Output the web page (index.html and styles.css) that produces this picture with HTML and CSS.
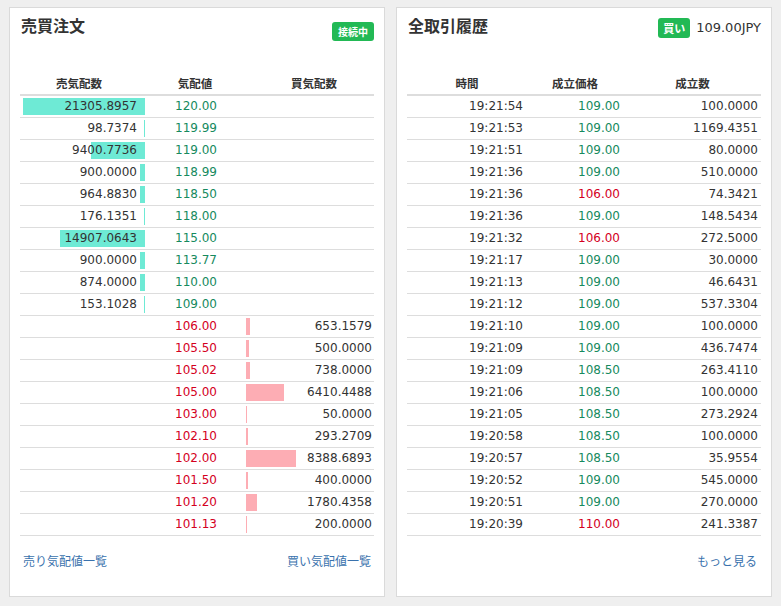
FILE: index.html
```html
<!DOCTYPE html>
<html lang="ja">
<head>
<meta charset="utf-8">
<link rel="stylesheet" href="styles.css">
</head>
<body>
<div class="page">
  <section class="card">
    <div class="card-head">
      <h2 class="title">売買注文</h2>
      <span class="badge badge-conn">接続中</span>
    </div>
    <div class="book">
      <div class="brow bhead">
        <div class="c1">売気配数</div>
        <div class="c2">気配値</div>
        <div class="c3">買気配数</div>
      </div>
      <div class="brow"><div class="c1"><i class="ask" style="width:122px"></i><span>21305.8957</span></div><div class="c2 up">120.00</div><div class="c3"></div></div>
      <div class="brow"><div class="c1"><i class="ask" style="width:0.57px"></i><span>98.7374</span></div><div class="c2 up">119.99</div><div class="c3"></div></div>
      <div class="brow"><div class="c1"><i class="ask" style="width:53.8px"></i><span>9400.7736</span></div><div class="c2 up">119.00</div><div class="c3"></div></div>
      <div class="brow"><div class="c1"><i class="ask" style="width:5.15px"></i><span>900.0000</span></div><div class="c2 up">118.99</div><div class="c3"></div></div>
      <div class="brow"><div class="c1"><i class="ask" style="width:5.5px"></i><span>964.8830</span></div><div class="c2 up">118.50</div><div class="c3"></div></div>
      <div class="brow"><div class="c1"><i class="ask" style="width:1px"></i><span>176.1351</span></div><div class="c2 up">118.00</div><div class="c3"></div></div>
      <div class="brow"><div class="c1"><i class="ask" style="width:85.4px"></i><span>14907.0643</span></div><div class="c2 up">115.00</div><div class="c3"></div></div>
      <div class="brow"><div class="c1"><i class="ask" style="width:5.15px"></i><span>900.0000</span></div><div class="c2 up">113.77</div><div class="c3"></div></div>
      <div class="brow"><div class="c1"><i class="ask" style="width:5px"></i><span>874.0000</span></div><div class="c2 up">110.00</div><div class="c3"></div></div>
      <div class="brow"><div class="c1"><i class="ask" style="width:0.9px"></i><span>153.1028</span></div><div class="c2 up">109.00</div><div class="c3"></div></div>
      <div class="brow"><div class="c1"></div><div class="c2 down">106.00</div><div class="c3"><i class="bid" style="width:3.9px"></i><span>653.1579</span></div></div>
      <div class="brow"><div class="c1"></div><div class="c2 down">105.50</div><div class="c3"><i class="bid" style="width:3px"></i><span>500.0000</span></div></div>
      <div class="brow"><div class="c1"></div><div class="c2 down">105.02</div><div class="c3"><i class="bid" style="width:4.4px"></i><span>738.0000</span></div></div>
      <div class="brow"><div class="c1"></div><div class="c2 down">105.00</div><div class="c3"><i class="bid" style="width:38.2px"></i><span>6410.4488</span></div></div>
      <div class="brow"><div class="c1"></div><div class="c2 down">103.00</div><div class="c3"><i class="bid" style="width:0.3px"></i><span>50.0000</span></div></div>
      <div class="brow"><div class="c1"></div><div class="c2 down">102.10</div><div class="c3"><i class="bid" style="width:1.75px"></i><span>293.2709</span></div></div>
      <div class="brow"><div class="c1"></div><div class="c2 down">102.00</div><div class="c3"><i class="bid" style="width:50px"></i><span>8388.6893</span></div></div>
      <div class="brow"><div class="c1"></div><div class="c2 down">101.50</div><div class="c3"><i class="bid" style="width:2.4px"></i><span>400.0000</span></div></div>
      <div class="brow"><div class="c1"></div><div class="c2 down">101.20</div><div class="c3"><i class="bid" style="width:10.6px"></i><span>1780.4358</span></div></div>
      <div class="brow"><div class="c1"></div><div class="c2 down">101.13</div><div class="c3"><i class="bid" style="width:1.2px"></i><span>200.0000</span></div></div>
    </div>
    <div class="links">
      <a class="link" href="#">売り気配値一覧</a>
      <a class="link" href="#">買い気配値一覧</a>
    </div>
  </section>

  <section class="card">
    <div class="card-head">
      <h2 class="title">全取引履歴</h2>
      <div class="last">
        <span class="badge badge-buy">買い</span>
        <span class="last-price">109.00JPY</span>
      </div>
    </div>
    <div class="trades">
      <div class="trow thead"><div>時間</div><div>成立価格</div><div>成立数</div></div>
      <div class="trow"><div>19:21:54</div><div class="up">109.00</div><div>100.0000</div></div>
      <div class="trow"><div>19:21:53</div><div class="up">109.00</div><div>1169.4351</div></div>
      <div class="trow"><div>19:21:51</div><div class="up">109.00</div><div>80.0000</div></div>
      <div class="trow"><div>19:21:36</div><div class="up">109.00</div><div>510.0000</div></div>
      <div class="trow"><div>19:21:36</div><div class="down">106.00</div><div>74.3421</div></div>
      <div class="trow"><div>19:21:36</div><div class="up">109.00</div><div>148.5434</div></div>
      <div class="trow"><div>19:21:32</div><div class="down">106.00</div><div>272.5000</div></div>
      <div class="trow"><div>19:21:17</div><div class="up">109.00</div><div>30.0000</div></div>
      <div class="trow"><div>19:21:13</div><div class="up">109.00</div><div>46.6431</div></div>
      <div class="trow"><div>19:21:12</div><div class="up">109.00</div><div>537.3304</div></div>
      <div class="trow"><div>19:21:10</div><div class="up">109.00</div><div>100.0000</div></div>
      <div class="trow"><div>19:21:09</div><div class="up">109.00</div><div>436.7474</div></div>
      <div class="trow"><div>19:21:09</div><div class="up">108.50</div><div>263.4110</div></div>
      <div class="trow"><div>19:21:06</div><div class="up">108.50</div><div>100.0000</div></div>
      <div class="trow"><div>19:21:05</div><div class="up">108.50</div><div>273.2924</div></div>
      <div class="trow"><div>19:20:58</div><div class="up">108.50</div><div>100.0000</div></div>
      <div class="trow"><div>19:20:57</div><div class="up">108.50</div><div>35.9554</div></div>
      <div class="trow"><div>19:20:52</div><div class="up">109.00</div><div>545.0000</div></div>
      <div class="trow"><div>19:20:51</div><div class="up">109.00</div><div>270.0000</div></div>
      <div class="trow"><div>19:20:39</div><div class="down">110.00</div><div>241.3387</div></div>
    </div>
    <div class="links links-end">
      <a class="link" href="#">もっと見る</a>
    </div>
  </section>
</div>
</body>
</html>
```

FILE: styles.css
```css
* { box-sizing: border-box; }

html, body {
  margin: 0;
  padding: 0;
  background: #efefef;
  font-family: "DejaVu Sans", "Noto Sans CJK JP", sans-serif;
  color: #333;
  font-size: 12px;
}

.page {
  display: flex;
  gap: 11px;
  padding: 7px 9px;
}

.card {
  width: 376px;
  height: 590px;
  background: #fff;
  border: 1px solid #dadada;
  padding: 7px 10px 0;
}

.card-head {
  display: flex;
  justify-content: space-between;
  align-items: flex-start;
  height: 57px;
}

.title {
  margin: 0 0 0 1px;
  font-size: 16px;
  line-height: 20px;
  font-weight: bold;
  font-family: "Noto Sans CJK JP", sans-serif;
  color: #333;
}

.badge {
  display: inline-block;
  background: #22b955;
  color: #fff;
  font-family: "Noto Sans CJK JP", sans-serif;
  font-weight: bold;
  font-size: 10px;
  border-radius: 3px;
  text-align: center;
}

.badge-conn {
  margin-top: 7px;
  width: 42px;
  height: 19px;
  line-height: 19px;
}

.badge-buy {
  width: 32px;
  height: 20px;
  line-height: 20px;
  font-size: 11px;
}

.last {
  display: flex;
  align-items: center;
  gap: 6px;
  margin-top: 3px;
}

.last-price {
  font-size: 13px;
  line-height: 20px;
  color: #333;
}

/* order book */
.brow {
  display: grid;
  grid-template-columns: 127px 100px 128px;
  height: 22px;
  border-bottom: 1px solid #dddddd;
  line-height: 20px;
}

.brow > div {
  position: relative;
  text-align: right;
}

.brow .c1 { padding-right: 10px; }
.brow .c2 { padding-right: 30px; }
.brow .c3 { padding-right: 3px; }

.brow span { position: relative; }

.bhead {
  border-bottom: 2px solid #dddddd;
  height: 24px;
  font-family: "Noto Sans CJK JP", sans-serif;
  font-weight: bold;
  font-size: 11.5px;
  line-height: 22px;
}

.bhead > div { text-align: center; }
.bhead .c1 { padding-right: 9px; }
.bhead .c2 { padding-right: 4px; }
.bhead .c3 { padding-left: 6px; padding-right: 0; }

.ask, .bid {
  position: absolute;
  top: 2px;
  height: 17px;
}

.ask { right: 2px; background: #6eead5; }
.bid { left: -1px; background: #fdadb4; }

.up { color: #168a5e; }
.down { color: #d4001e; }

/* trades */
.trow {
  display: grid;
  grid-template-columns: 120px 96px 139px;
  height: 22px;
  border-bottom: 1px solid #dddddd;
  line-height: 20px;
}

.trow > div { text-align: right; }
.trow > div:nth-child(1) { padding-right: 4px; }
.trow > div:nth-child(2) { padding-right: 3px; }
.trow > div:nth-child(3) { padding-right: 4px; }

.thead {
  border-bottom: 2px solid #dddddd;
  height: 24px;
  font-family: "Noto Sans CJK JP", sans-serif;
  font-weight: bold;
  font-size: 11.5px;
  line-height: 22px;
}

.thead > div { text-align: center; }
.thead > div:nth-child(n) { padding: 0; }

.links {
  display: flex;
  justify-content: space-between;
  margin-top: 17px;
  padding: 0 3px;
}

.links-end { justify-content: flex-end; padding-right: 4px; }

.link {
  color: #3a72ad;
  text-decoration: none;
  font-family: "Noto Sans CJK JP", sans-serif;
  font-size: 12px;
  line-height: 16px;
}
```
